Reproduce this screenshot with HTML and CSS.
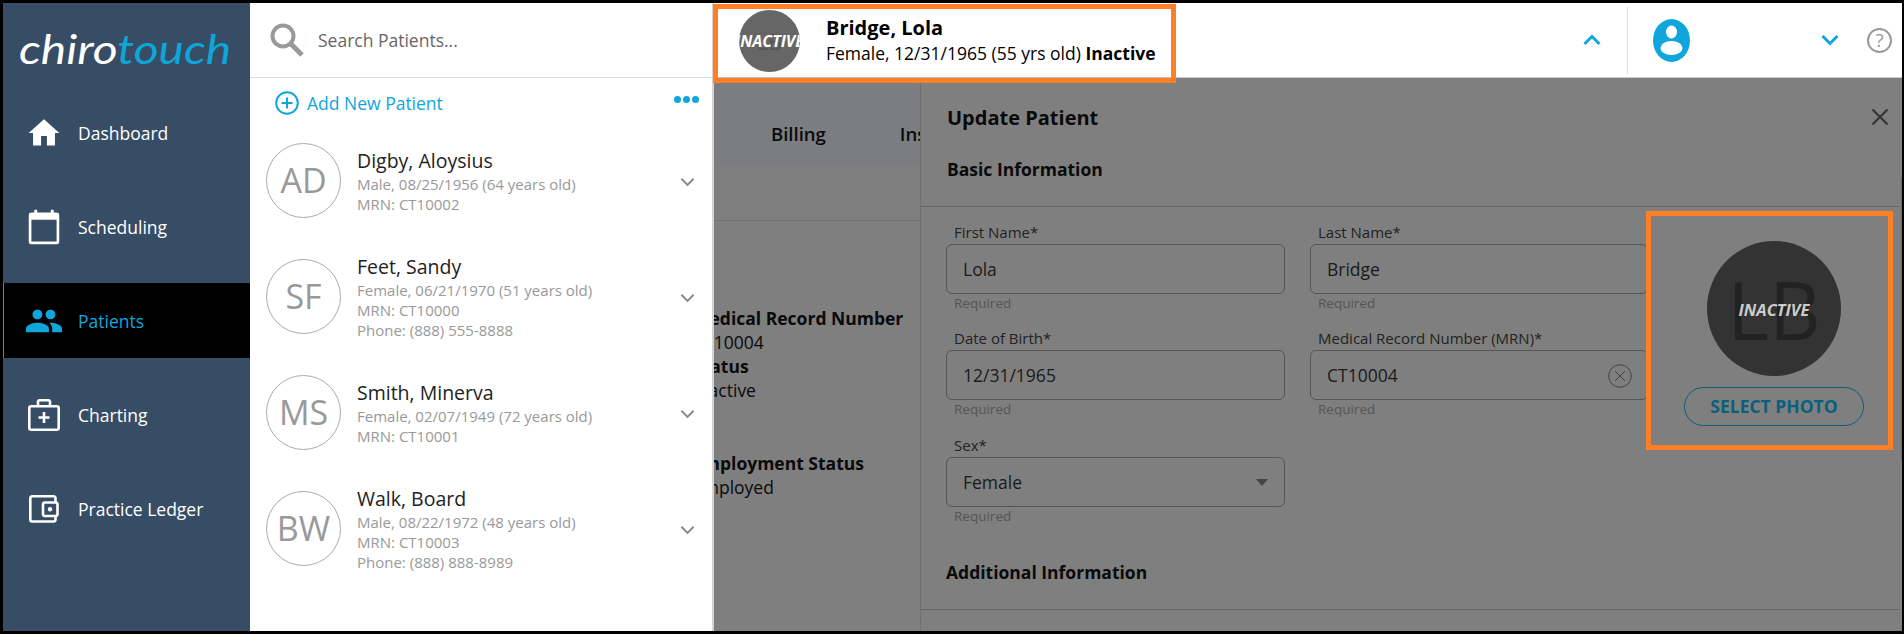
FILE: index.html
```html
<!DOCTYPE html>
<html>
<head>
  <title>ChiroTouch - Patients</title>
  <link rel="stylesheet" href="styles.css">
</head>
<body>
  <div class="app">
    <!-- Left nav -->
    <nav class="sidebar">
      <div class="logo"><div class="logo-text"><span class="logo-white">chiro</span><span class="logo-blue">touch</span></div></div>
      <a class="nav-item">
        <svg class="nav-icon icon-home" viewBox="0 0 24 24"><path d="M10 20.5v-6.500h4v6.500h5.500v-8.500h3L12 2.500 1.500 12h3v8.500z" fill="#fff"/></svg>
        Dashboard
      </a>
      <a class="nav-item">
        <svg class="nav-icon icon-cal" viewBox="0 0 32 36"><rect x="1.500" y="4.500" width="29" height="30" rx="2" fill="none" stroke="#fff" stroke-width="3"/><rect x="1.500" y="4.500" width="29" height="6" fill="#fff"/><rect x="6" y="0" width="3" height="6" fill="#fff"/><rect x="23" y="0" width="3" height="6" fill="#fff"/></svg>
        Scheduling
      </a>
      <a class="nav-item active">
        <svg class="nav-icon icon-people" viewBox="1 5 22 14"><path d="M16 11c1.660 0 2.990-1.340 2.990-3S17.660 5 16 5c-1.660 0-3 1.340-3 3s1.340 3 3 3zm-8 0c1.660 0 2.990-1.340 2.990-3S9.660 5 8 5C6.340 5 5 6.340 5 8s1.340 3 3 3zm0 2c-2.330 0-7 1.170-7 3.500V19h14v-2.500c0-2.330-4.670-3.500-7-3.500zm8 0c-.29 0-.62.02-.97.05 1.160.84 1.970 1.970 1.970 3.450V19h6v-2.500c0-2.330-4.670-3.500-7-3.500z" fill="#10a6dc"/></svg>
        Patients
      </a>
      <a class="nav-item">
        <svg class="nav-icon icon-chart" viewBox="0 0 32 32"><rect x="1.300" y="7.300" width="29.400" height="23.400" rx="2" fill="none" stroke="#fff" stroke-width="2.600"/><path d="M10 7V3a1.500 1.500 0 0 1 1.500-1.700h9A1.500 1.500 0 0 1 22 3v4" fill="none" stroke="#fff" stroke-width="2.600"/><path d="M16 13v11M10.500 18.500h11" stroke="#fff" stroke-width="2.600"/></svg>
        Charting
      </a>
      <a class="nav-item">
        <svg class="nav-icon icon-wallet" viewBox="0 0 30 28"><path d="M26.500 7V3.500A2 2 0 0 0 24.500 1.300H3.300A2 2 0 0 0 1.300 3.500v21a2 2 0 0 0 2 2H24.500a2 2 0 0 0 2-2V21" fill="none" stroke="#fff" stroke-width="2.600"/><rect x="14" y="7.500" width="14.500" height="13.500" rx="2" fill="none" stroke="#fff" stroke-width="2.600"/><circle cx="21" cy="14.200" r="2.200" fill="#fff"/></svg>
        Practice Ledger
      </a>
    </nav>

    <!-- Patient search column -->
    <section class="search-col">
      <div class="search-bar">
        <svg class="search-icon" viewBox="0 0 34 34"><circle cx="13" cy="13" r="10.500" fill="none" stroke="#999" stroke-width="4"/><path d="M20.500 20.500L32 32" stroke="#999" stroke-width="5"/></svg>
        <span>Search Patients...</span>
      </div>
      <div class="add-row">
        <svg class="add-icon" viewBox="0 0 24 24"><circle cx="12" cy="12" r="10.800" fill="none" stroke="#10a6dc" stroke-width="2"/><path d="M12 6.500v11M6.500 12h11" stroke="#10a6dc" stroke-width="2"/></svg>
        <span>Add New Patient</span>
        <div class="dots"><i></i><i></i><i></i></div>
      </div>
      <div class="patient-list">
        <div class="patient-row">
          <div class="avatar">AD</div>
          <div class="patient-text">
            <div class="patient-name">Digby, Aloysius</div>
            <div class="patient-sub">Male, 08/25/1956 (64 years old)</div>
            <div class="patient-sub">MRN: CT10002</div>
          </div>
          <svg class="row-chevron" viewBox="0 0 16 10"><path d="M1.500 1.500L8 8l6.500-6.500" fill="none" stroke="#888" stroke-width="2"/></svg>
        </div>
        <div class="patient-row">
          <div class="avatar">SF</div>
          <div class="patient-text">
            <div class="patient-name">Feet, Sandy</div>
            <div class="patient-sub">Female, 06/21/1970 (51 years old)</div>
            <div class="patient-sub">MRN: CT10000</div>
            <div class="patient-sub">Phone: (888) 555-8888</div>
          </div>
          <svg class="row-chevron" viewBox="0 0 16 10"><path d="M1.500 1.500L8 8l6.500-6.500" fill="none" stroke="#888" stroke-width="2"/></svg>
        </div>
        <div class="patient-row">
          <div class="avatar">MS</div>
          <div class="patient-text">
            <div class="patient-name">Smith, Minerva</div>
            <div class="patient-sub">Female, 02/07/1949 (72 years old)</div>
            <div class="patient-sub">MRN: CT10001</div>
          </div>
          <svg class="row-chevron" viewBox="0 0 16 10"><path d="M1.500 1.500L8 8l6.500-6.500" fill="none" stroke="#888" stroke-width="2"/></svg>
        </div>
        <div class="patient-row">
          <div class="avatar">BW</div>
          <div class="patient-text">
            <div class="patient-name">Walk, Board</div>
            <div class="patient-sub">Male, 08/22/1972 (48 years old)</div>
            <div class="patient-sub">MRN: CT10003</div>
            <div class="patient-sub">Phone: (888) 888-8989</div>
          </div>
          <svg class="row-chevron" viewBox="0 0 16 10"><path d="M1.500 1.500L8 8l6.500-6.500" fill="none" stroke="#888" stroke-width="2"/></svg>
        </div>
      </div>
    </section>

    <main class="main">
      <header class="topbar">
        <svg class="top-chevron" viewBox="0 0 18 12"><path d="M1.500 10L9 2.500 16.500 10" fill="none" stroke="#10a6dc" stroke-width="3"/></svg>
        <div class="top-divider"></div>
        <svg class="user-icon" viewBox="0 0 37 43"><ellipse cx="18.500" cy="21.500" rx="18.500" ry="21.500" fill="#10a6dc"/><ellipse cx="18.500" cy="13" rx="5.500" ry="6.500" fill="#fff"/><ellipse cx="18.500" cy="29" rx="11" ry="7" fill="#fff"/></svg>
        <svg class="top-chevron down" viewBox="0 0 18 12"><path d="M1.500 2L9 9.500 16.500 2" fill="none" stroke="#10a6dc" stroke-width="3"/></svg>
        <div class="help-icon">?</div>
      </header>

      <!-- Orange call-out on the patient summary -->
      <div class="summary-box">
        <div class="summary-inner">
          <div class="summary-avatar">
            <span class="summary-initials">LB</span>
            <span class="summary-inactive">INACTIVE</span>
          </div>
          <div class="summary-text">
            <div class="summary-name">Bridge, Lola</div>
            <div class="summary-sub">Female, 12/31/1965 (55 yrs old) <b>Inactive</b></div>
          </div>
        </div>
      </div>

      <div class="content">
        <div class="page">
          <div class="tabs"><span>Billing</span><span>Insurance</span></div>
          <div class="page-info">
            <dl>
              <dt>Medical Record Number</dt>
              <dd>CT10004</dd>
              <dt>Status</dt>
              <dd>Inactive</dd>
            </dl>
            <dl>
              <dt>Employment Status</dt>
              <dd>Employed</dd>
            </dl>
          </div>
        </div>

        <div class="drawer">
          <div class="drawer-head">
            <svg class="close-icon" viewBox="0 0 18 18"><path d="M1.500 1.500l15 15M16.500 1.500l-15 15" stroke="#333" stroke-width="2"/></svg>
            <h2>Update Patient</h2>
            <h3>Basic Information</h3>
          </div>
          <div class="form-grid">
            <div class="field">
              <label>First Name*</label>
              <div class="input">Lola</div>
              <small>Required</small>
            </div>
            <div class="field">
              <label>Last Name*</label>
              <div class="input">Bridge</div>
              <small>Required</small>
            </div>
            <div class="field">
              <label>Date of Birth*</label>
              <div class="input">12/31/1965</div>
              <small>Required</small>
            </div>
            <div class="field">
              <label>Medical Record Number (MRN)*</label>
              <div class="input">CT10004
                <svg class="clear-icon" viewBox="0 0 24 24"><circle cx="12" cy="12" r="11.300" fill="none" stroke="#444" stroke-width="1"/><path d="M7 7l10 10M17 7L7 17" stroke="#444" stroke-width="1"/></svg>
              </div>
              <small>Required</small>
            </div>
            <div class="field sex-field">
              <label>Sex*</label>
              <div class="input">Female<i class="select-arrow"></i></div>
              <small>Required</small>
            </div>
          </div>
          <div class="drawer-section"><h3>Additional Information</h3></div>

          <!-- Orange call-out on the photo picker -->
          <div class="photo-box">
            <div class="photo-circle">
              <span class="photo-initials">LB</span>
              <span class="photo-inactive">INACTIVE</span>
            </div>
            <div class="photo-btn">SELECT PHOTO</div>
          </div>
          <div class="scroll-thumb"></div>
        </div>
      </div>
    </main>
  </div>
</body>
</html>
```

FILE: styles.css
```css
html, body {
  margin: 0;
  height: 634px;
  overflow: hidden;
  background: #000;
  font-family: "Open Sans", sans-serif;
  font-size: 17.5px;
}
.app {
  display: flex;
  height: 628px;
  margin: 3px 2px 3px 3px;
}

/* sidebar */
.sidebar {
  width: 247px;
  flex: none;
  background: #374d66;
  color: #fff;
}
.logo {
  height: 92px;
  box-sizing: border-box;
  padding: 21px 0 0 16px;
  font-family: "Lato", sans-serif;
  font-size: 41px;
  font-weight: 400;
  font-style: italic;
  line-height: 50px;
}
.logo-text {
  transform: scaleX(1.17);
  transform-origin: left center;
  white-space: nowrap;
}
.logo-white { color: #fff; }
.logo-blue { color: #0ea5d8; }
.nav-item {
  display: flex;
  align-items: center;
  height: 75px;
  margin-bottom: 19px;
  padding-left: 75px;
  position: relative;
  font-size: 17.5px;
}
.nav-icon {
  position: absolute;
  left: 41px;
  top: 50%;
  transform: translate(-50%, -50%);
}
.icon-home { width: 35px; height: 35px; }
.icon-cal { width: 31px; height: 35px; }
.icon-people { width: 36px; height: 23px; }
.icon-chart { width: 32px; height: 32px; }
.icon-wallet { width: 30px; height: 28px; }
.nav-item.active {
  background: #000;
  color: #10a6dc;
  box-shadow: inset 1px 0 0 #10a6dc;
}

/* search column */
.search-col {
  width: 464px;
  flex: none;
  background: #fff;
  border-right: 2px solid #d4d4d4;
  box-sizing: border-box;
  display: flex;
  flex-direction: column;
}
.search-bar {
  height: 75px;
  box-sizing: border-box;
  flex: none;
  border-bottom: 1px solid #ddd;
  display: flex;
  align-items: center;
  padding-left: 20px;
  color: #666;
}
.search-icon {
  width: 34px;
  height: 34px;
  margin-right: 14px;
}
.add-row {
  height: 44px;
  box-sizing: border-box;
  padding-top: 5px;
  flex: none;
  display: flex;
  align-items: center;
  padding-left: 25px;
  color: #10a6dc;
  position: relative;
}
.add-icon {
  width: 24px;
  height: 24px;
  margin-right: 8px;
}
.dots {
  position: absolute;
  top: 18px;
  left: 424px;
  display: flex;
  gap: 2px;
}
.dots i {
  width: 7px;
  height: 7px;
  border-radius: 50%;
  background: #10a6dc;
}
.patient-row {
  height: 116px;
  display: flex;
  align-items: center;
  padding-left: 16px;
}
.avatar {
  width: 73px;
  height: 73px;
  flex: none;
  border: 1px solid #aaa;
  border-radius: 50%;
  display: flex;
  align-items: center;
  justify-content: center;
  color: #999;
  font-size: 34px;
}
.patient-text {
  margin-left: 16px;
  flex: 1;
}
.patient-name {
  font-size: 19.5px;
  line-height: 30px;
  margin-bottom: -2px;
  color: #222;
}
.patient-sub {
  font-size: 15px;
  line-height: 20px;
  color: #999;
}
.row-chevron {
  width: 15px;
  height: 10px;
  margin-top: 3px;
  margin-right: 17px;
}

/* right side */
.main {
  flex: 1;
  display: flex;
  flex-direction: column;
  position: relative;
  min-width: 0;
}
.topbar {
  height: 75px;
  box-sizing: border-box;
  flex: none;
  background: #fff;
  border-bottom: 1px solid #ccc;
  display: flex;
  align-items: center;
  justify-content: flex-end;
  padding-right: 10px;
}
.top-chevron {
  width: 18px;
  height: 12px;
}
.top-divider {
  width: 1px;
  height: 67px;
  background: #ddd;
  margin-left: 26px;
}
.user-icon {
  width: 37px;
  height: 43px;
  margin-left: 25px;
}
.top-chevron.down {
  margin-left: 131px;
}
.help-icon {
  width: 21px;
  height: 21px;
  margin-left: 28px;
  border: 2px solid #999;
  border-radius: 50%;
  color: #999;
  font-size: 19px;
  line-height: 21px;
  text-align: center;
}
.summary-box {
  position: absolute;
  left: -1px;
  top: 1px;
  width: 463px;
  height: 79px;
  box-sizing: border-box;
  border: 5px solid #ff7f27;
  background: #fff;
  z-index: 2;
}
.summary-inner {
  height: 69px;
  box-sizing: border-box;
  border-bottom: 1px solid #bbb;
  display: flex;
  align-items: center;
  padding-left: 21px;
  color: #000;
}
.summary-avatar {
  width: 61px;
  height: 62px;
  margin-top: -5px;
  margin-right: 26px;
  flex: none;
  border-radius: 50%;
  background: #666;
  overflow: hidden;
  display: flex;
  align-items: center;
  justify-content: center;
  position: relative;
}
.summary-initials {
  color: #555;
  font-size: 22px;
}
.summary-inactive {
  position: absolute;
  left: 50%;
  top: 50%;
  transform: translate(-50%, -50%);
  color: #fff;
  font-size: 16px;
  font-weight: 700;
  font-style: italic;
  white-space: nowrap;
}
.summary-text {
  margin-top: -7px;
}
.summary-name {
  font-size: 20px;
  font-weight: 700;
  line-height: 26px;
}
.summary-sub {
  font-size: 17.5px;
  line-height: 24px;
}

.content {
  flex: 1;
  display: flex;
  background: #7f7f7f;
  min-height: 0;
  color: #0a0a0a;
}
.page {
  width: 206px;
  flex: none;
  overflow: hidden;
}
.tabs {
  height: 88px;
  box-sizing: border-box;
  padding: 43px 0 0 57px;
  background: #7b7d80;
  white-space: nowrap;
  font-weight: 600;
  font-size: 18.5px;
  line-height: 26px;
  display: flex;
  gap: 74px;
}
.page-info {
  margin-left: -21px;
  margin-top: 54px;
  padding: 86px 0 0 5px;
  white-space: nowrap;
  line-height: 24px;
  background: linear-gradient(#707070, #707070) top left / 100% 1px no-repeat;
}
.page-info dl {
  margin: 0 0 49px;
  margin-left: -5px;
}
.page-info dt { font-weight: 700; }
.page-info dd { margin: 0; }

.drawer {
  flex: 1;
  position: relative;
  border-left: 1px solid #6f6f6f;
}
.drawer-head {
  height: 129px;
  box-sizing: border-box;
  border-bottom: 1px solid #666;
  margin-right: 3px;
  padding: 28px 0 0 26px;
  position: relative;
}
.drawer h2 {
  margin: 0 0 27px;
  font-size: 20px;
  line-height: 24px;
  font-weight: 700;
}
.drawer h3 {
  margin: 0;
  font-size: 17.5px;
  line-height: 24px;
  font-weight: 700;
}
.close-icon {
  position: absolute;
  right: 10px;
  top: 30px;
  width: 18px;
  height: 18px;
}
.form-grid {
  display: grid;
  grid-template-columns: 339px 338px;
  column-gap: 25px;
  row-gap: 17px;
  padding: 15px 0 0 25px;
}
.field label {
  display: block;
  margin-left: 8px;
  margin-bottom: 2px;
  font-size: 15px;
  line-height: 20px;
  color: #222;
}
.input {
  height: 50px;
  box-sizing: border-box;
  border: 1px solid #555;
  border-radius: 6px;
  padding: 0 16px;
  display: flex;
  align-items: center;
  position: relative;
  color: #1a1a1a;
  font-size: 17.5px;
}
.field small {
  display: block;
  margin: 1px 0 0 8px;
  font-size: 13.5px;
  line-height: 16px;
  color: #555;
}
.sex-field { margin-top: 1px; }
.clear-icon {
  position: absolute;
  right: 15px;
  top: 13px;
  width: 24px;
  height: 24px;
}
.select-arrow {
  position: absolute;
  right: 16px;
  top: 21px;
  border-left: 6px solid transparent;
  border-right: 6px solid transparent;
  border-top: 7px solid #444;
}
.drawer-section {
  margin-top: 36px;
  height: 49px;
  margin-right: 3px;
  padding-left: 25px;
  border-bottom: 1px solid #666;
}
.photo-box {
  position: absolute;
  right: 9px;
  top: 133px;
  width: 247px;
  height: 239px;
  box-sizing: border-box;
  border: 5px solid #ff7f27;
  background: #7f7f7f;
  display: flex;
  flex-direction: column;
  align-items: center;
  padding-top: 25px;
  padding-left: 9px;
}
.photo-circle {
  width: 134px;
  height: 135px;
  border-radius: 50%;
  background: #333;
  position: relative;
  display: flex;
  align-items: center;
  justify-content: center;
}
.photo-initials {
  color: #222;
  font-size: 80px;
}
.photo-inactive {
  position: absolute;
  left: 50%;
  top: 50%;
  transform: translate(-50%, -50%);
  color: #ccc;
  font-size: 16.5px;
  font-weight: 700;
  font-style: italic;
}
.photo-btn {
  margin-top: 11px;
  width: 180px;
  height: 39px;
  box-sizing: border-box;
  border: 1px solid #0b5f7c;
  border-radius: 20px;
  color: #0b5f7c;
  font-size: 17.5px;
  font-weight: 700;
  line-height: 37px;
  text-align: center;
}
.scroll-thumb {
  position: absolute;
  right: 0;
  top: 100px;
  width: 1px;
  height: 282px;
  background: #666;
}
```
